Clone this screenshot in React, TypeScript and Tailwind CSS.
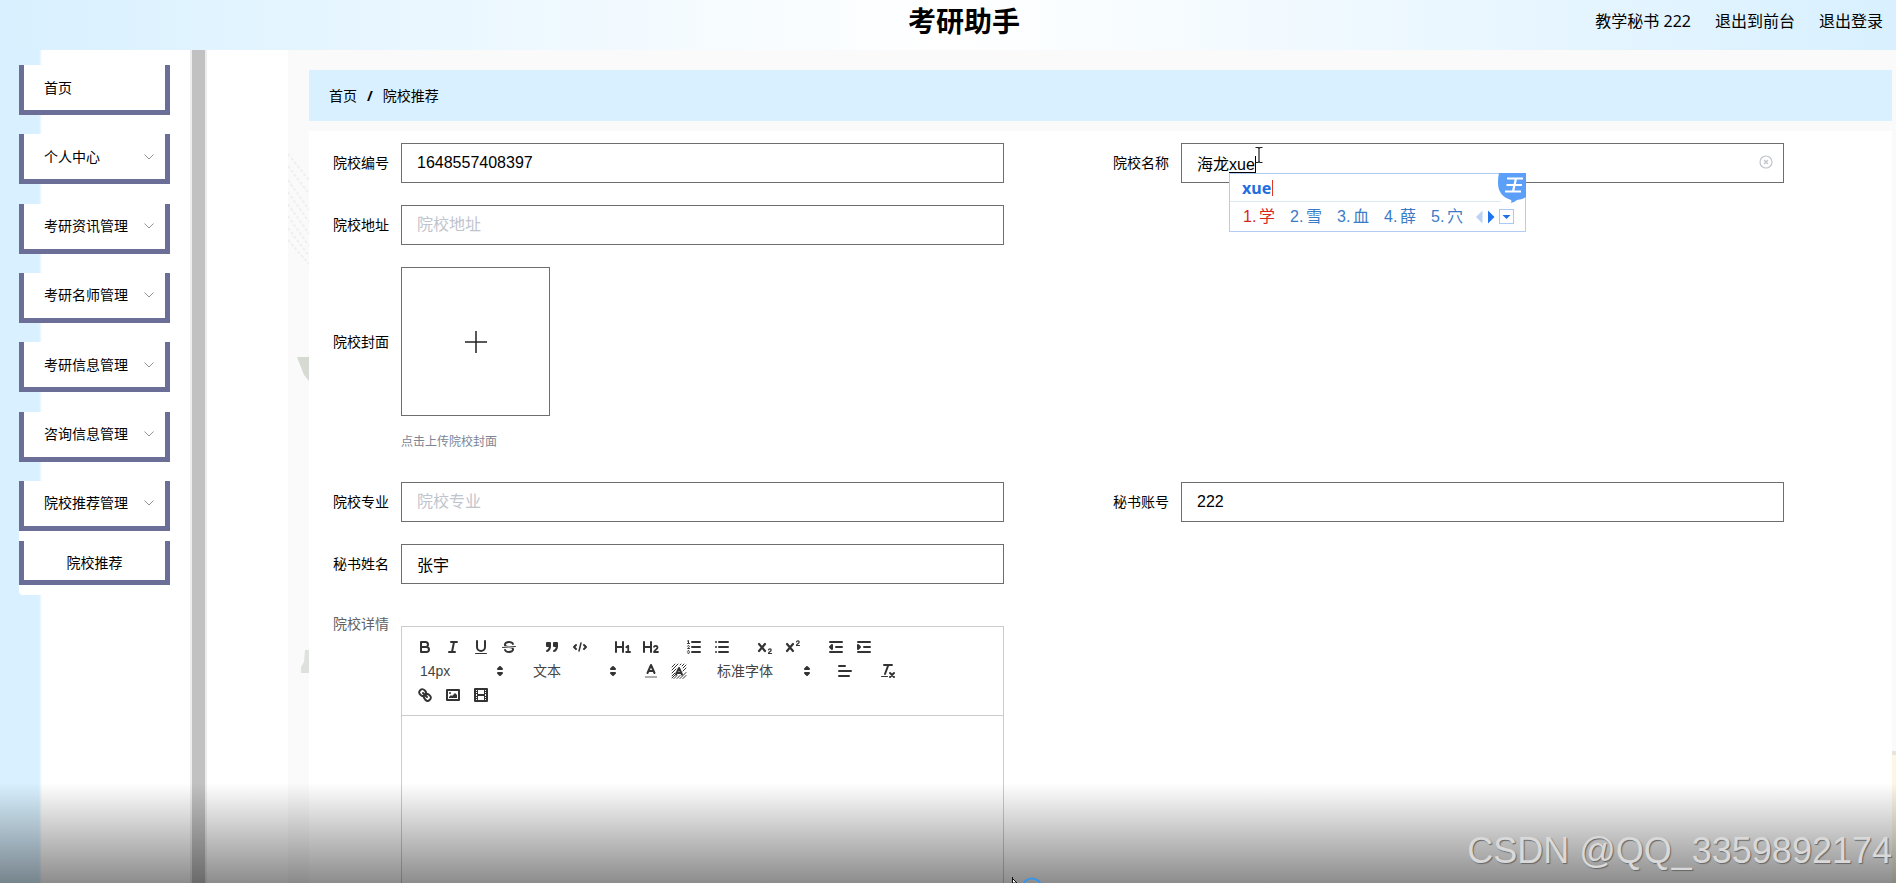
import { useId, useState, type ReactNode } from "react";

const MENU = [
  { title: "首页", expandable: false },
  { title: "个人中心", expandable: true },
  { title: "考研资讯管理", expandable: true },
  { title: "考研名师管理", expandable: true },
  { title: "考研信息管理", expandable: true },
  { title: "咨询信息管理", expandable: true },
  { title: "院校推荐管理", expandable: true },
];

const CANDIDATES = ["学", "雪", "血", "薛", "穴"];

function Chevron() {
  return (
    <svg className="h-3 w-3 shrink-0" viewBox="0 0 12 12" fill="none" stroke="#909399">
      <path d="M1.5 3.5 6 8l4.500-4.500" />
    </svg>
  );
}

function Header() {
  return (
    <header className="relative flex h-[50px] shrink-0 items-center justify-end bg-linear-to-r from-[#d8f0ff] via-white to-[#d8f0ff] pr-[13px] pb-2">
      <h1 className="absolute inset-x-0 top-0 pl-8 text-center text-[28px] leading-[46px] font-bold text-black">
        考研助手
      </h1>
      <nav className="relative flex items-baseline gap-6 font-['Noto_Sans','Noto_Sans_CJK_SC',sans-serif] text-base leading-6 text-black">
        <span>教学秘书 222</span>
        <a href="#front">退出到前台</a>
        <a href="#logout">退出登录</a>
      </nav>
    </header>
  );
}

function Sidebar() {
  return (
    <aside className="flex shrink-0">
      <div className="w-[190px] bg-linear-to-r from-[#d8f0ff] from-[39px] to-white to-[42px] pt-[15px] pl-[19px] text-sm text-black">
        <ul className="flex h-[466px] flex-col justify-between">
          {MENU.map((item) => (
            <li key={item.title}>
              <button
                type="button"
                className="flex h-[50px] w-[151px] items-center justify-between border-x-[5px] border-b-[5px] border-[#6b6f98] bg-white pr-2.5 pl-5"
              >
                {item.title}
                {item.expandable && <Chevron />}
              </button>
            </li>
          ))}
        </ul>
        <div className="w-[151px] rounded-b-sm bg-white py-2.5">
          <a
            href="#recommend"
            className="flex h-[44px] items-center justify-center border-x-[5px] border-b-[5px] border-[#6b6f98] pt-1"
          >
            院校推荐
          </a>
        </div>
      </div>
      <div className="flex w-[17px] bg-[#ededed] px-[2px]">
        <div className="flex-1 bg-[#c1c1c1]" />
      </div>
    </aside>
  );
}

function Icon({ children }: { children: ReactNode }) {
  return (
    <svg
      className="h-[18px] w-[18px]"
      viewBox="0 0 18 18"
      fill="none"
      stroke="#333"
      strokeWidth="2"
      strokeLinecap="round"
      strokeLinejoin="round"
    >
      {children}
    </svg>
  );
}

const fill = { fill: "#333", stroke: "none" };

const icons = {
  bold: (
    <path d="M5 4h4.500a2.500 2.500 0 0 1 0 5H5ZM5 9h5.500a2.500 2.500 0 0 1 0 5H5Z" />
  ),
  italic: <path d="M7 4h6M5 14h6M8 14l2-10" />,
  underline: (
    <>
      <path d="M5 3v6a4 4 0 0 0 8 0V3" />
      <rect {...fill} x="3" y="15" width="12" height="1" rx=".5" />
    </>
  ),
  strike: (
    <>
      <path strokeWidth="1" d="M15.500 8.500l-13 1" />
      <path
        {...fill}
        d="M9.007 8C6.542 7.791 6 7.519 6 6.500 6 5.792 7.283 5 9 5c1.571 0 2.765.679 2.969 1.309a1 1 0 0 0 1.900-.617C13.356 4.106 11.354 3 9 3 6.200 3 4 4.538 4 6.500a3.200 3.200 0 0 0 .5 1.843Z"
      />
      <path
        {...fill}
        d="M8.984 10C11.457 10.208 12 10.479 12 11.500c0 .708-1.283 1.500-3 1.500-1.571 0-2.765-.679-2.969-1.309a1 1 0 1 0-1.900.617C4.644 13.894 6.646 15 9 15c2.800 0 5-1.538 5-3.500a3.200 3.200 0 0 0-.5-1.843Z"
      />
    </>
  ),
  quote: (
    <g fill="#333">
      <rect x="4" y="5" width="3" height="3" />
      <rect x="11" y="5" width="3" height="3" />
      <path d="M7 8c0 4.031-3 5-3 5M14 8c0 4.031-3 5-3 5" />
    </g>
  ),
  code: (
    <>
      <path d="M5 7 3 9l2 2M13 7l2 2-2 2" />
      <path strokeWidth="1.500" d="M10 5 8 13" />
    </>
  ),
  h1: (
    <>
      <path d="M2 4v10M9 4v10M2 9h7" />
      <path strokeWidth="1.800" d="M12.300 9.200 14.200 7.800V14M12.200 14h3.900" />
    </>
  ),
  h2: (
    <>
      <path d="M2 4v10M9 4v10M2 9h7" />
      <path strokeWidth="1.800" d="M12 8.800c1-1.500 3.500-1.200 3.500.7 0 1.800-3 2.400-3.500 4.500h4" />
    </>
  ),
  ordered: (
    <>
      <path d="M7 4h8M7 9h8M7 14h8" />
      <path
        strokeWidth="1"
        d="M2.500 3 3.500 2.500v3M2.500 5.500h2M4.500 10.500h-2c0-.234 1.850-1.076 1.850-2.234a.959.959 0 0 0-1.850-.110M2.500 14.846a.959.959 0 0 0 1.850-.109.7.7 0 0 0-.6-.737.688.688 0 0 0 .6-.736.959.959 0 0 0-1.850-.109"
      />
    </>
  ),
  bullet: <path d="M6 4h9M6 9h9M6 14h9M3 4h0M3 9h0M3 14h0" />,
  sub: (
    <>
      <path strokeWidth="2.200" d="M3 6l6 7M9 6l-6 7" />
      <path strokeWidth="1.200" d="M12.500 11.900c.3-1.500 2.700-1.400 2.700.1 0 1.600-2.700 2-2.700 3.500h3" />
    </>
  ),
  sup: (
    <>
      <path strokeWidth="2.200" d="M3 6l6 7M9 6l-6 7" />
      <path strokeWidth="1.200" d="M12.500 3.900c.3-1.500 2.700-1.400 2.700.1 0 1.600-2.700 2-2.700 3.500h3" />
    </>
  ),
  outdent: (
    <>
      <path d="M3 4h12M3 14h12M9 9h6" />
      <path fill="#333" d="M5 7v4L3 9Z" />
    </>
  ),
  indent: (
    <>
      <path d="M3 4h12M3 14h12M9 9h6" />
      <path fill="#333" d="M3 7v4l2-2Z" />
    </>
  ),
  color: (
    <>
      <path strokeOpacity=".4" strokeLinecap="butt" d="M3 15h12" />
      <path d="M5.500 11 9 3l3.500 8M11.630 9H6.380" />
    </>
  ),
  background: (
    <>
      <path
        strokeWidth="1"
        d="M2 5l3-3M2 8l6-6M2 11l4-4M10 3l1-1M2 14l3-3M2 16l4-4M4 16.500l3-3M7 16.500l3-3M10 16.500l6-6M13 16.500l3-3M13 6l3-3M12 4l2-2M13 9l3-3"
      />
      <path d="M6 12.500 9 6l3 6.500M11 11H7" />
    </>
  ),
  align: <path d="M3 9h12M3 14h10M3 4h6" />,
  clean: (
    <>
      <path d="M5 3h8M6 12 9.350 3M11 11l4 4M15 11l-4 4" />
      <rect {...fill} x="2" y="14" width="7" height="1" rx=".5" />
    </>
  ),
  link: (
    <>
      <path d="M7 7l4 4" />
      <path d="M8.900 4.577a3.476 3.476 0 0 1 .36 4.679A3.476 3.476 0 0 1 4.577 8.900C3.185 7.500 2.035 6.400 4.217 4.217S7.500 3.185 8.900 4.577ZM13.423 9.100a3.476 3.476 0 0 0-4.679-.36 3.476 3.476 0 0 0 .36 4.679c1.392 1.392 2.500 2.542 4.679.36S14.815 10.500 13.423 9.100Z" />
    </>
  ),
  image: (
    <>
      <rect x="3" y="4" width="12" height="10" />
      <circle {...fill} cx="6" cy="7" r="1" />
      <path {...fill} d="M5 12v-1l2-2 1 1 3-3 2 2v3Z" />
    </>
  ),
  video: (
    <>
      <rect x="3" y="3" width="12" height="12" />
      <path
        {...fill}
        d="M5 3h1v12H5ZM12 3h1v12h-1ZM5 8h8v2H5ZM3 5h3v1H3ZM3 7h3v1H3ZM3 10h3v1H3ZM3 12h3v1H3ZM12 5h3v1h-3ZM12 7h3v1h-3ZM12 10h3v1h-3ZM12 12h3v1h-3Z"
      />
    </>
  ),
};

type IconName = keyof typeof icons;

function ToolGroup({ names }: { names: IconName[] }) {
  return (
    <div className="mr-[15px] flex">
      {names.map((name) => (
        <button
          key={name}
          type="button"
          aria-label={name}
          className="flex h-6 w-7 items-center justify-center"
        >
          <Icon>{icons[name]}</Icon>
        </button>
      ))}
    </div>
  );
}

function Picker({ label, text, wide }: { label: string; text: string; wide?: boolean }) {
  return (
    <div className={`relative mr-[15px] h-6 ${wide ? "w-[108px]" : "w-[98px]"}`}>
      <select
        aria-label={label}
        className="h-6 w-full appearance-none bg-transparent pl-[9px] text-sm leading-6 text-[#444]"
      >
        <option>{text}</option>
      </select>
      <span className="pointer-events-none absolute top-[3px] right-0">
        <Icon>
          <path fill="#333" d="M7 11h4l-2 2ZM7 7h4L9 5Z" />
        </Icon>
      </span>
    </div>
  );
}

function Editor() {
  return (
    <div className="flex h-[420px] w-[85%] flex-col border border-[#ccc]">
      <div className="border-b border-[#ccc] py-2 pr-20 pl-[9px]">
        <div className="flex flex-wrap">
          <ToolGroup names={["bold", "italic", "underline", "strike"]} />
          <ToolGroup names={["quote", "code"]} />
          <ToolGroup names={["h1", "h2"]} />
          <ToolGroup names={["ordered", "bullet"]} />
          <ToolGroup names={["sub", "sup"]} />
          <ToolGroup names={["outdent", "indent"]} />
        </div>
        <div className="flex flex-wrap">
          <Picker label="字号" text="14px" />
          <Picker label="标题" text="文本" />
          <ToolGroup names={["color", "background"]} />
          <Picker label="字体" text="标准字体" wide />
          <ToolGroup names={["align"]} />
          <ToolGroup names={["clean"]} />
        </div>
        <div className="flex">
          <ToolGroup names={["link", "image", "video"]} />
        </div>
      </div>
      <textarea aria-label="院校详情" className="flex-1 resize-none px-4 py-3 text-sm outline-none" />
    </div>
  );
}

function Field({
  label,
  value = "",
  placeholder,
  children,
}: {
  label: string;
  value?: string;
  placeholder?: string;
  children?: ReactNode;
}) {
  const id = useId();
  const [text, setText] = useState(value);
  return (
    <div className="flex">
      <label htmlFor={id} className="w-[71px] shrink-0 pr-3 text-right text-sm leading-10 text-black">
        {label}
      </label>
      <div className="flex-1">
        <div className="relative w-[85%]">
          <input
            id={id}
            value={text}
            placeholder={placeholder}
            onChange={(e) => setText(e.target.value)}
            className="block h-10 w-full border border-[#6e6e6e] bg-white px-[15px] text-base text-black outline-none placeholder:text-[#c0c4cc]"
          />
          {children}
        </div>
      </div>
    </div>
  );
}

function ImePopup() {
  return (
    <div className="absolute top-[30px] left-[48px] z-10 w-[297px] border border-[#b3cdf2] bg-white">
      <div className="mr-6 flex h-[28px] items-center border-b border-[#dbe8f8] pl-3 font-['Noto_Sans',sans-serif] text-base font-bold text-[#1f6fe0]">
        xue
        <span className="ml-px h-4 w-px bg-[#e0392b]" />
      </div>
      <div className="flex h-[29px] items-center pt-px pl-[13px] text-base">
        <ol className="flex gap-[15px]">
          {CANDIDATES.map((c, i) => (
            <li key={c} className={`flex ${i === 0 ? "text-[#d8261c]" : "text-[#3a7bc8]"}`}>
              <span className="w-4">{i + 1}.</span>
              {c}
            </li>
          ))}
        </ol>
        <svg className="ml-3 h-4 w-10 shrink-0" viewBox="0 0 40 16">
          <path d="M7.500 1.500v13L1 8Z" fill="#b9d2f8" />
          <path d="M13 1.500v13L19.500 8Z" fill="#1f75f0" />
          <rect x="24.500" y=".5" width="14" height="14" fill="#fff" stroke="#a9c8f2" />
          <path d="M27.500 6h8l-4 4Z" fill="#1f6fe0" />
        </svg>
      </div>
      <svg className="absolute -top-px -right-px h-[30px] w-7" viewBox="0 0 28 30">
        <path d="M1 0H28V24Q24 27 19 27Q17 29 13 30Q14 28 13 27Q0 23 0 10Q0 4 1 0Z" fill="#5b9ff8" />
        <path
          d="M9 5.500H25M8.500 12H24M7 18.500H23M18 5.500 15 18.500"
          stroke="#fff"
          strokeWidth="2.200"
          fill="none"
        />
      </svg>
    </div>
  );
}

function SchoolForm() {
  return (
    <form className="flex flex-col gap-[22px] bg-white pt-3 pr-[2px] pl-[21px]">
      <div className="grid grid-cols-2">
        <Field label="院校编号" value="1648557408397" />
        <Field label="院校名称" value="海龙xue">
          <span className="absolute top-[29px] left-12 h-px w-[26px] bg-black" />
          <span className="absolute top-[13px] left-[74px] h-[17px] w-px bg-black" />
          <svg
            className="absolute top-1 left-[74px] h-4 w-2"
            viewBox="0 0 8 16"
            fill="none"
            stroke="#222"
            strokeWidth="1.200"
          >
            <path d="M.5.5H3L4 1.500 5 .5h2.500M4 1.500v13M.5 15.500H3l1-1 1 1h2.500" />
          </svg>
          <button type="button" aria-label="清空" className="absolute top-3 right-[11px]">
            <svg className="h-[14px] w-[14px]" viewBox="0 0 14 14" fill="none" stroke="#c0c4cc">
              <circle cx="7" cy="7" r="6" strokeWidth="1.200" />
              <path d="M5 5l4 4M9 5 5 9" strokeWidth="1.300" />
            </svg>
          </button>
          <ImePopup />
        </Field>
      </div>
      <div className="grid grid-cols-2">
        <Field label="院校地址" placeholder="院校地址" />
      </div>
      <div className="flex">
        <span className="w-[71px] shrink-0 pr-3 text-right text-sm leading-[150px] text-black">
          院校封面
        </span>
        <div className="pb-2">
          <button
            type="button"
            aria-label="上传院校封面"
            className="flex h-[149px] w-[149px] items-center justify-center border border-[#6e6e6e]"
          >
            <svg className="h-6 w-6" viewBox="0 0 24 24" stroke="#222" strokeWidth="1.500">
              <path d="M1 12h22M12 1v22" />
            </svg>
          </button>
          <p className="mt-4 text-xs leading-5 text-[#7c8594]">点击上传院校封面</p>
        </div>
      </div>
      <div className="grid grid-cols-2">
        <Field label="院校专业" placeholder="院校专业" />
        <Field label="秘书账号" value="222" />
      </div>
      <div className="grid grid-cols-2">
        <Field label="秘书姓名" value="张宇" />
      </div>
      <div className="grid grid-cols-2">
        <div className="flex">
          <span className="w-[71px] shrink-0 pr-3 text-right text-sm leading-9 text-[#606266]">
            院校详情
          </span>
          <div className="flex-1 pt-5">
            <Editor />
          </div>
        </div>
      </div>
    </form>
  );
}

function Backdrop() {
  return (
    <>
      <svg className="absolute top-24 left-0 h-40 w-[21px]" viewBox="0 0 21 160" fill="none">
        <g stroke="#eff0ed" strokeWidth="2" strokeDasharray="3 2">
          <path d="M0 8l21 26M0 20l21 28M0 34l21 30M0 46l21 30M0 58l21 30M0 70l21 30M0 82l21 28M0 94l21 24" />
        </g>
      </svg>
      <svg className="absolute top-[307px] left-[9px] h-7 w-3" viewBox="0 0 12 28">
        <path d="M0 0H12V24L7 18Z" fill="#d5dad3" />
      </svg>
      <svg className="absolute top-[600px] left-[13px] h-6 w-2" viewBox="0 0 8 24">
        <path d="M4 0H8V23H0V17L3 12Z" fill="#dde2dd" />
      </svg>
      <div className="absolute right-0 bottom-0 h-[132px] w-1 border-t-4 border-[#e8e4da] bg-[#fbf6e6]" />
    </>
  );
}

export default function App() {
  return (
    <div className="relative flex h-screen flex-col overflow-hidden bg-white font-['Liberation_Sans','Noto_Sans_CJK_SC',sans-serif]">
      <Header />
      <div className="flex min-h-0 flex-1">
        <Sidebar />
        <main className="relative ml-[81px] min-w-0 flex-1 overflow-hidden bg-[#fafafa] pt-5 pr-1 pl-[21px]">
          <Backdrop />
          <nav className="relative mb-2.5 flex h-[51px] items-center gap-2.5 bg-[#d8f0ff] pl-5 text-sm text-black">
            <a href="#home">首页</a>
            <span className="font-['Noto_Sans',sans-serif] font-bold">/</span>
            <span>院校推荐</span>
          </nav>
          <div className="relative">
            <SchoolForm />
          </div>
        </main>
      </div>
      <div className="pointer-events-none absolute inset-x-0 bottom-0 flex h-[100px] items-end justify-end bg-linear-to-b from-black/0 to-black/45 pr-1">
        <span className="pb-3 text-[36px] leading-10 text-[#d9d9d9] [text-shadow:1px_1px_1px_#666]">
          CSDN @QQ_3359892174
        </span>
      </div>
      <svg className="absolute bottom-0 left-1/2 ml-16 h-[6px] w-8" viewBox="0 0 32 6">
        <path d="M.5 0v6H5L.5 1.500Z" fill="#fff" stroke="#111" />
        <circle cx="20" cy="11" r="9.500" fill="none" stroke="#3a95e6" strokeWidth="2" />
      </svg>
    </div>
  );
}
